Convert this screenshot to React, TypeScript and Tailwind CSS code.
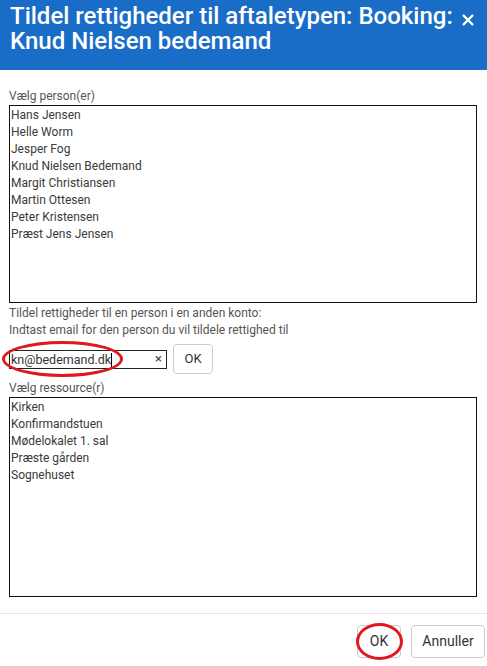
import React from "react";

const persons = [
  "Hans Jensen",
  "Helle Worm",
  "Jesper Fog",
  "Knud Nielsen Bedemand",
  "Margit Christiansen",
  "Martin Ottesen",
  "Peter Kristensen",
  "Præst Jens Jensen",
];

const resources = [
  "Kirken",
  "Konfirmandstuen",
  "Mødelokalet 1. sal",
  "Præste gården",
  "Sognehuset",
];

const ListBox = ({ items, height }: { items: string[]; height: string }) => (
  <div className={`border border-[#111] ${height} px-[1px] pt-[1px] overflow-hidden`}>
    {items.map((item) => (
      <div key={item} className="text-[12px] leading-[17px] text-[#3a3a3a]">
        {item}
      </div>
    ))}
  </div>
);

export default function App() {
  return (
    <div
      className="relative w-[487px] h-[666px] bg-white overflow-hidden"
      style={{ fontFamily: "Roboto, 'Liberation Sans', sans-serif" }}
    >
      {/* Header */}
      <div className="h-[70px] bg-[#1a6dc6] flex justify-between items-start pl-[10px] pr-[12px] pt-[4px]">
        <h2 className="text-white text-[24px] leading-[25px] font-medium">
          Tildel rettigheder til aftaletypen: Booking:
          <br />
          Knud Nielsen bedemand
        </h2>
        <button className="text-white mt-[9px]">
          <svg width="14" height="14" viewBox="0 0 14 14">
            <path d="M2 2L12 12M12 2L2 12" stroke="white" strokeWidth="2.4" />
          </svg>
        </button>
      </div>

      {/* Body */}
      <div className="pl-[9px] pr-[10px] pt-[18px]">
        <label className="block text-[12px] leading-[16px] text-[#555] mb-[1px]">
          Vælg person(er)
        </label>
        <ListBox items={persons} height="h-[198px]" />

        <div className="mt-[2px] text-[12px] leading-[17px] text-[#555]">
          Tildel rettigheder til en person i en anden konto:
          <br />
          Indtast email for den person du vil tildele rettighed til
        </div>

        <div className="flex items-center gap-[6px] mt-[5px]">
          <div className="w-[158px] h-[19px] border border-[#222] flex items-center justify-between pl-[1px] pr-[4px] text-[12.5px] text-[#333]">
            <span className="leading-[17px]">
              kn@bedemand.dk<span className="inline-block w-[1px] h-[14px] bg-black align-middle" />
            </span>
            <span className="text-[13px] text-[#444]">×</span>
          </div>
          <button className="w-[40px] h-[30px] border border-[#ccc] rounded-[4px] text-[13px] text-[#333] bg-white">
            OK
          </button>
        </div>

        <label className="block mt-[6px] text-[12px] leading-[16px] text-[#555] mb-[1px]">
          Vælg ressource(r)
        </label>
        <ListBox items={resources} height="h-[200px]" />
      </div>

      {/* Footer */}
      <div className="mt-[16px] border-t border-[#e5e5e5] flex justify-end gap-[10px] pt-[11px] pr-[2px]">
        <button className="w-[44px] h-[33px] border border-[#ccc] rounded-[4px] text-[14px] text-[#333] bg-white">
          OK
        </button>
        <button className="w-[74px] h-[33px] border border-[#ccc] rounded-[4px] text-[14px] text-[#333] bg-white">
          Annuller
        </button>
      </div>

      {/* Red annotation ellipses */}
      <div className="absolute left-[2px] top-[341px] w-[121px] h-[36px] border-[3px] border-[#e0171f] rounded-[50%]" />
      <div className="absolute left-[356px] top-[623px] w-[47px] h-[37px] border-[3px] border-[#e0171f] rounded-[50%]" />
    </div>
  );
}
